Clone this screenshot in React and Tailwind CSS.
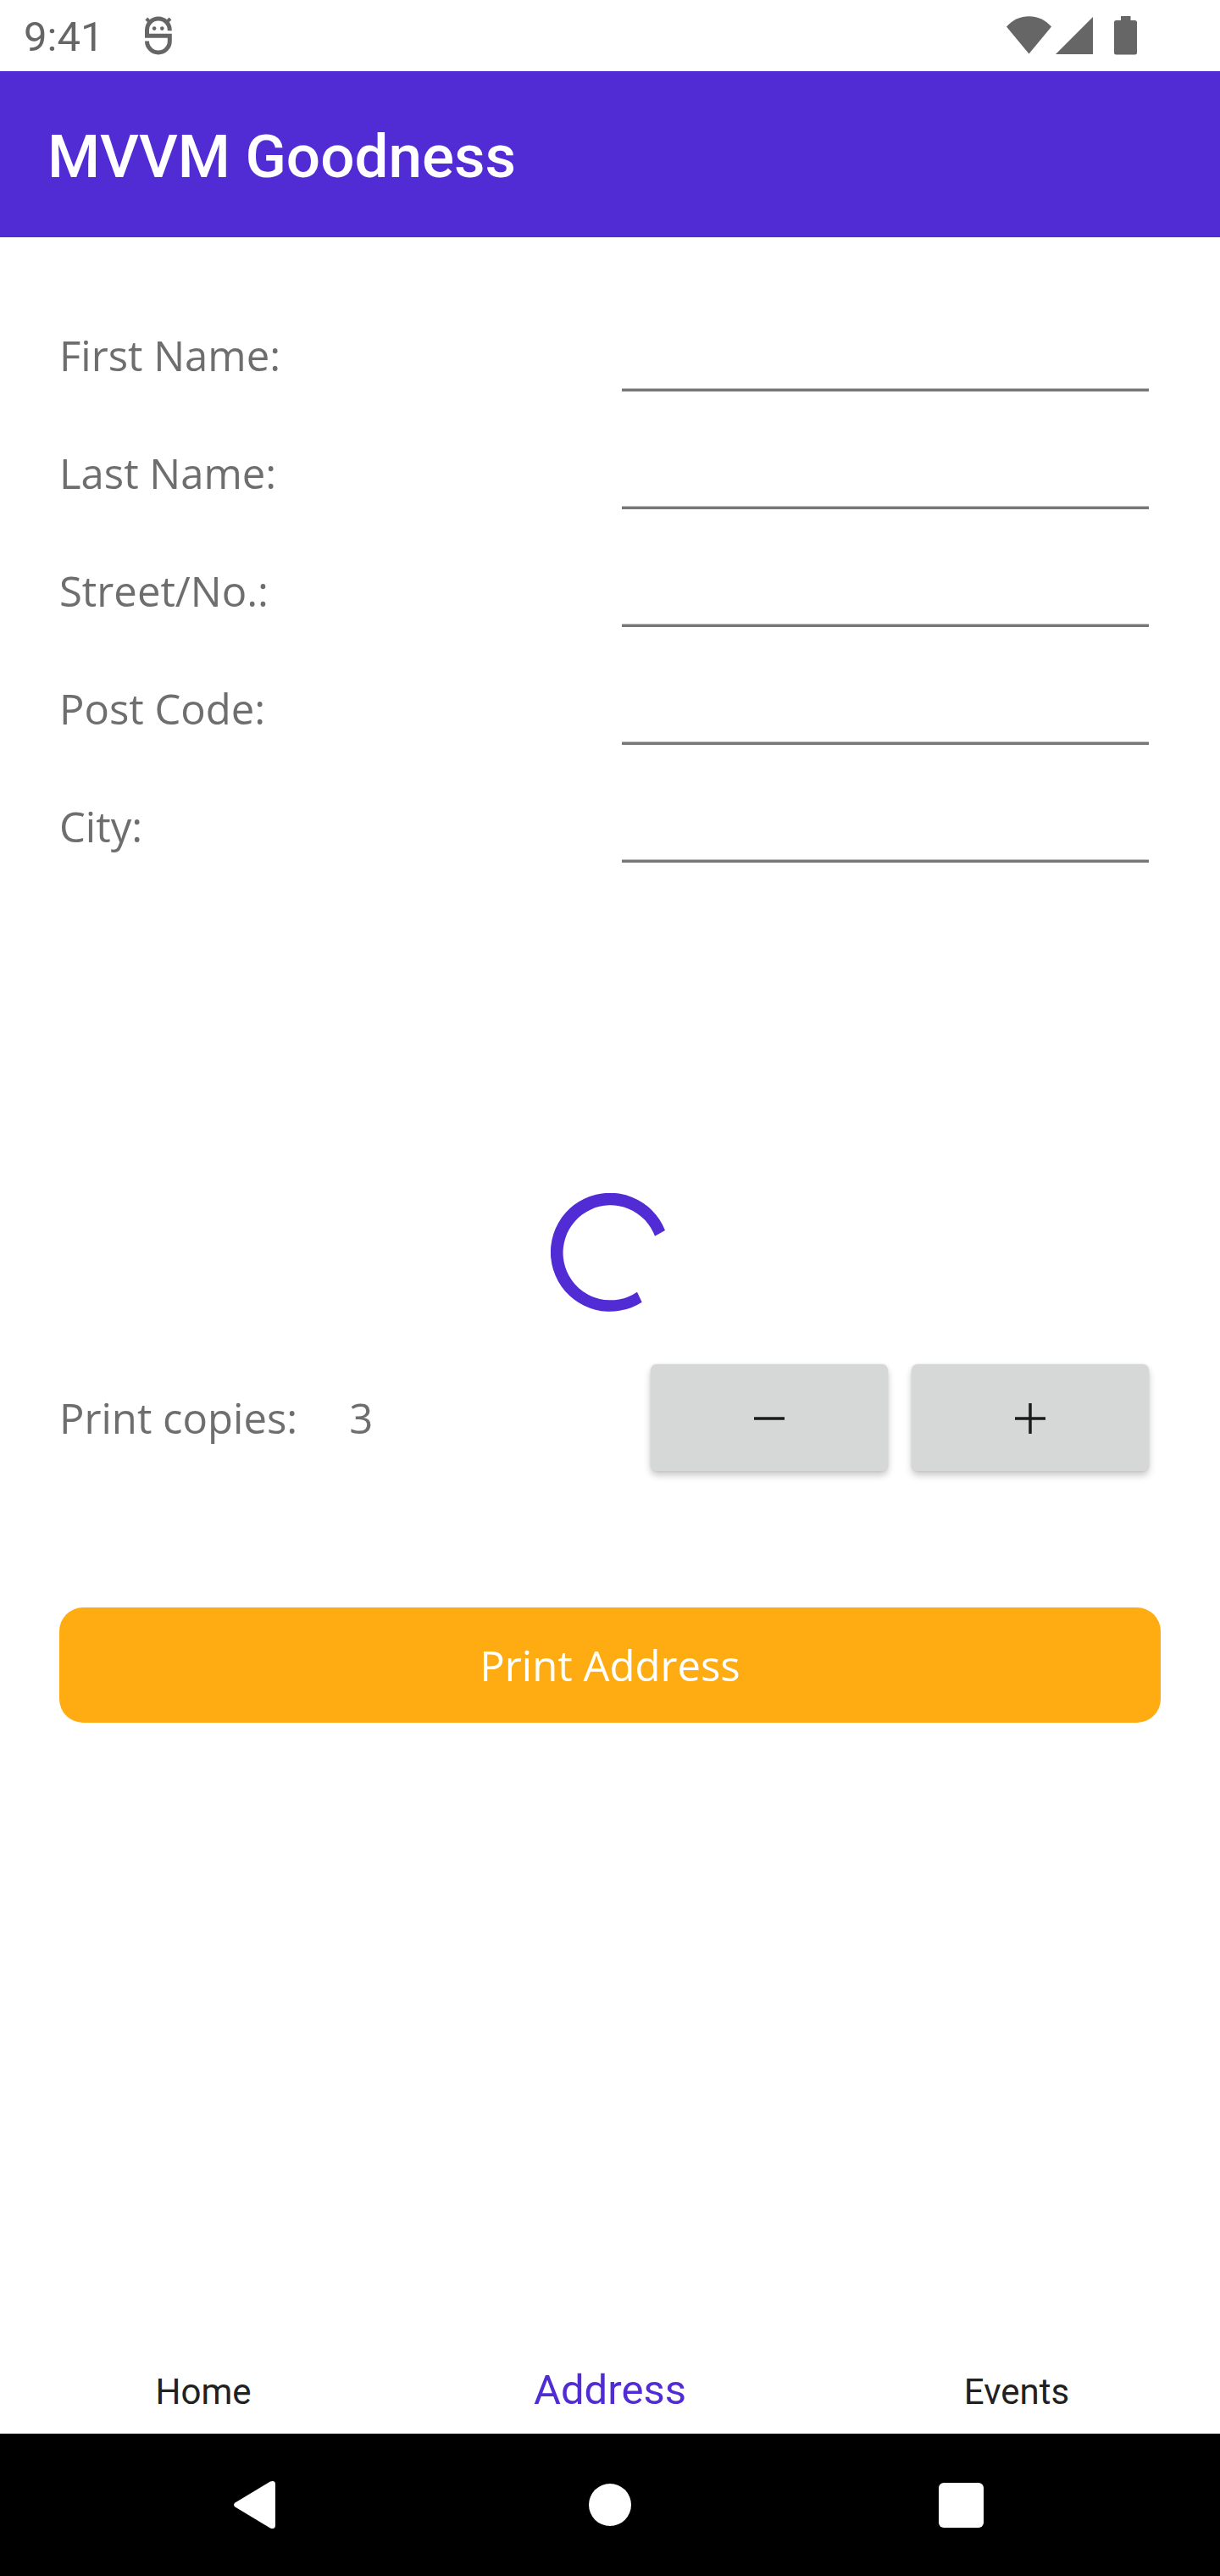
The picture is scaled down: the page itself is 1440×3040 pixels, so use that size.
import { useState } from "react";

const FIELDS = [
  { id: "first-name", label: "First Name:" },
  { id: "last-name", label: "Last Name:" },
  { id: "street", label: "Street/No.:" },
  { id: "post-code", label: "Post Code:" },
  { id: "city", label: "City:" },
];

function DebugIcon() {
  return (
    <svg className="h-[46px] w-[32px]" viewBox="0 0 32 46" fill="none" stroke="#666" strokeWidth="5" aria-hidden="true">
      <path d="M29.300 17.200V16.500A13.400 13.400 0 0 0 2.500 16.500V23.200H29.300V29.500A13.400 13.400 0 0 1 2.500 29.500" />
      <path d="M1.800 3L6.500 7.700M30 3L25.300 7.700" strokeWidth="4" />
      <circle cx="11.100" cy="14.600" r="2.300" fill="#666" stroke="none" />
      <circle cx="20.300" cy="14.600" r="2.300" fill="#666" stroke="none" />
    </svg>
  );
}

function StatusBar() {
  return (
    <div className="flex h-[84px] items-center justify-between pr-[98px] pl-7 text-[#666]">
      <div className="flex items-center gap-[49px]">
        <span className="pt-1 text-[49px] leading-[58px]">9:41</span>
        <DebugIcon />
      </div>
      <div className="flex items-center">
        <svg className="h-[46px] w-[53px]" viewBox="0 0 53 46" fill="currentColor" aria-hidden="true">
          <path d="M26.500 44.500L0 12.500C14 -4 39 -4 53 12.500Z" />
        </svg>
        <svg className="ml-[5px] h-[46px] w-[44px]" viewBox="0 0 44 46" fill="currentColor" aria-hidden="true">
          <path d="M44 1V45H0Z" />
        </svg>
        <svg className="ml-[25px] h-[46px] w-[27px]" viewBox="0 0 27 46" fill="currentColor" aria-hidden="true">
          <path d="M8 0H19.500V5H24.500Q27 5 27 7.500V43Q27 45.500 24.500 45.500H2.500Q0 45.500 0 43V7.500Q0 5 2.500 5H8Z" />
        </svg>
      </div>
    </div>
  );
}

function Field({ id, label }) {
  return (
    <div className="grid h-[139px] grid-cols-2 items-center">
      <label htmlFor={id}>{label}</label>
      <input
        id={id}
        type="text"
        className="mx-3.5 h-[85px] min-w-0 border-b-3 border-[#777] bg-transparent text-[#212121] shadow-[inset_0_-1px_0_#bdbdbd] outline-none"
      />
    </div>
  );
}

function StepButton({ label, onClick, children }) {
  return (
    <button
      type="button"
      aria-label={label}
      onClick={onClick}
      className="flex h-[126px] w-[280px] items-center justify-center rounded-[7px] bg-[#d6d8d7] pt-0.5 shadow-[0_5px_8px_rgba(0,0,0,0.22),0_0_3px_rgba(0,0,0,0.1)]"
    >
      <svg className="h-9 w-9" viewBox="0 0 36 36" fill="none" stroke="#1c1b1c" strokeWidth="3.500" aria-hidden="true">
        {children}
      </svg>
    </button>
  );
}

export default function App() {
  const [copies, setCopies] = useState(3);

  return (
    <div className="flex min-h-screen flex-col bg-white font-[Roboto,sans-serif]">
      <StatusBar />
      <header className="flex h-[196px] items-center bg-[#512bd4] px-14 pt-1.5">
        <h1 className="text-[71px] leading-[82px] font-medium text-white">MVVM Goodness</h1>
      </header>

      <main className="flex grow flex-col p-[70px] font-['Open_Sans',sans-serif] text-[49px] leading-[67px] text-[#6e6e6e]">
        <form>
          {FIELDS.map((f) => (
            <Field key={f.id} id={f.id} label={f.label} />
          ))}
        </form>

        <svg role="status" aria-label="Loading" className="mx-auto mt-[363px] h-[140px] w-[140px]" viewBox="0 0 140 140" fill="#512bd4">
          <path d="M135 44L123 50.700A56 56 0 1 0 102 116.700L107.700 128.700A70 70 0 1 1 135 44Z" />
        </svg>

        <div className="mt-[62px] flex items-center justify-between pr-3.5">
          <div className="flex gap-[61px]">
            <span>Print copies:</span>
            <output>{copies}</output>
          </div>
          <div className="flex gap-7">
            <StepButton label="Fewer copies" onClick={() => setCopies(Math.max(1, copies - 1))}>
              <path d="M0 18H36" />
            </StepButton>
            <StepButton label="More copies" onClick={() => setCopies(copies + 1)}>
              <path d="M0 18H36M18 0V36" />
            </StepButton>
          </div>
        </div>

        <button type="button" className="mt-[161px] h-[136px] w-full rounded-[28px] bg-[#ffac12] text-white">
          Print Address
        </button>
      </main>

      <nav className="grid grid-cols-3 items-baseline pb-5 text-center text-[42px] leading-[58px] text-[#212121]">
        <a href="#home">Home</a>
        <a href="#address" aria-current="page" className="text-[49px] text-[#512bd4]">Address</a>
        <a href="#events">Events</a>
      </nav>

      <div className="grid h-[168px] grid-cols-3 bg-black px-[98px]">
        <button type="button" aria-label="Back" className="flex items-center justify-center">
          <svg className="h-[58px] w-[58px]" viewBox="0 0 58 58" fill="#fff" aria-hidden="true">
            <path d="M1.500 26.500L43 1.500Q49 -0.500 49 5V53Q49 58.500 43 56.500L1.500 31.500Q-1.500 29 1.500 26.500Z" />
          </svg>
        </button>
        <button type="button" aria-label="Home" className="flex items-center justify-center">
          <span className="size-[50px] rounded-full bg-white" />
        </button>
        <button type="button" aria-label="Recent apps" className="flex items-center justify-center">
          <span className="size-[53px] rounded-md bg-white" />
        </button>
      </div>
    </div>
  );
}
